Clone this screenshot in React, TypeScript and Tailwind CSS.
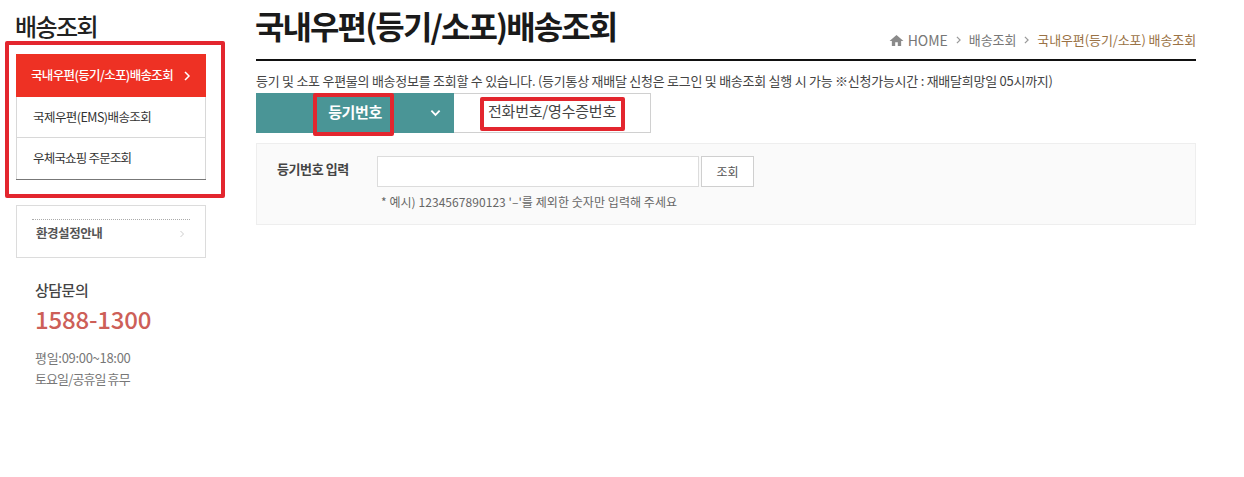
import React from "react";

function Chevron({ className, color, width = 1.5 }: { className: string; color: string; width?: number }) {
  return (
    <svg viewBox="0 0 8 10" className={className} fill="none" stroke={color} strokeWidth={width}>
      <path d="M2 1l4 4-4 4" />
    </svg>
  );
}

export default function App() {
  return (
    <div className="relative flex w-[1244px] h-[477px] bg-white pl-4 font-['Noto_Sans_CJK_KR','Noto_Sans',sans-serif] text-[#333] overflow-hidden">
      <aside className="w-[190px] shrink-0">
        <h2 className="mt-[9px] h-[36px] -ml-[1px] text-[24px] leading-[34px] font-medium tracking-[-1.6px] text-[#222]">배송조회</h2>
        <nav className="mt-[9px] border-b border-[#777]">
          <div className="flex items-center h-[43px] bg-[#ee3124] pl-[15px] text-[12.5px] font-medium tracking-[-0.65px] text-white">
            <span>국내우편(등기/소포)배송조회</span>
            <Chevron className="w-[8px] h-[10px] ml-[10px]" color="#fff" />
          </div>
          <div className="flex items-center h-[41px] pt-[1px] border-x border-b border-[#d8d8d8] pl-4 text-[12.5px] tracking-[-0.55px] text-[#333]">국제우편(EMS)배송조회</div>
          <div className="flex items-center h-[41px] border-x border-[#d8d8d8] pl-4 text-[12.5px] tracking-[-0.8px] text-[#333]">우체국쇼핑 주문조회</div>
        </nav>
        <div className="mt-[25px] h-[53px] border border-[#dcdcdc] px-[15px] pt-[13px]">
          <div className="flex items-center justify-between h-[28px] border-t border-dotted border-[#aaa] pl-[4px] pr-[5px]">
            <span className="text-[12.5px] font-bold tracking-[-0.45px] text-[#555]">환경설정안내</span>
            <Chevron className="w-[6px] h-[10px]" color="#bbb" width={1} />
          </div>
        </div>
        <div className="mt-[22px] pl-[19px]">
          <div className="text-[15px] leading-[20px] font-medium tracking-[-0.5px] text-[#444]">상담문의</div>
          <div className="mt-[3px] text-[24px] leading-[32px] font-medium tracking-[-0.2px] text-[#cd5f58]">1588-1300</div>
          <div className="mt-[12px] text-[13px] leading-[21px] text-[#777]">
            <div className="tracking-[-0.3px]">평일:09:00~18:00</div>
            <div className="tracking-[-0.9px]">토요일/공휴일 휴무</div>
          </div>
        </div>
      </aside>
      <main className="ml-[50px] w-[940px] shrink-0">
        <div className="flex items-end justify-between h-[61px] border-b-2 border-[#111]">
          <h1 className="self-start mt-[2px] -ml-[1px] text-[32px] leading-[46px] font-semibold tracking-[-1.9px] text-[#1a1a1a]">국내우편(등기/소포)배송조회</h1>
          <div className="flex items-center h-[40px] pt-[2px] text-[13px] text-[#777] tracking-[-0.1px]">
            <svg viewBox="0 0 16 14" className="w-[15px] h-[13px] mr-[4px]" fill="#8a8a8a"><path d="M8 1L0.5 7.5h2.5V13h3.6V9h2.8v4H13V7.5h2.5z" /></svg>
            <span className="text-[14px] tracking-[0]">HOME</span>
            <Chevron className="w-[7px] h-[8px] mx-[7px]" color="#999" />
            <span>배송조회</span>
            <Chevron className="w-[7px] h-[8px] mx-[7px]" color="#999" />
            <span className="text-[#9a7245]">국내우편(등기/소포) 배송조회</span>
          </div>
        </div>
        <p className="mt-[10px] h-[22px] text-[13px] leading-[20px] tracking-[-0.26px] text-[#444]">등기 및 소포 우편물의 배송정보를 조회할 수 있습니다. (등기통상 재배달 신청은 로그인 및 배송조회 실행 시 가능 ※신청가능시간 : 재배달희망일 05시까지)</p>
        <div className="flex w-[395px] h-[40px]">
          <div className="relative flex items-center justify-center w-[198px] pb-[1px] bg-[#4a9596] text-white text-[15px] font-bold tracking-[-0.4px]">
            등기번호
            <svg viewBox="0 0 12 8" className="absolute right-[13px] top-[16px] w-[11px] h-[8px]" fill="none" stroke="#fff" strokeWidth="2"><path d="M1.5 1.5L6 6l4.5-4.5" /></svg>
          </div>
          <div className="flex items-center justify-center flex-1 pb-[3px] border border-l-0 border-[#d0d0d0] text-[15px] tracking-[-0.2px] text-[#444]">전화번호/영수증번호</div>
        </div>
        <div className="mt-[10px] h-[82px] border border-[#eeeeee] bg-[#fafafa] flex">
          <div className="w-[120px] pl-[20px] pt-[15px] text-[13px] leading-[20px] font-bold tracking-[-0.4px] text-[#444]">등기번호 입력</div>
          <div className="pt-[12px]">
            <div className="flex gap-[2px] h-[31px]">
              <input aria-label="등기번호 입력" className="w-[322px] h-[31px] border border-[#dcdcdc] bg-white" />
              <button className="w-[53px] h-[31px] border border-[#cfcfcf] bg-white text-[12px] text-[#555]">조회</button>
            </div>
            <div className="mt-[5px] pl-[4px] text-[12px] leading-[20px] tracking-[0.06px] text-[#666]">* 예시) 1234567890123 '–'를 제외한 숫자만 입력해 주세요</div>
          </div>
        </div>
      </main>
      <div className="absolute left-[5px] top-[41px] w-[220px] h-[157px] border-4 border-[#e3262e] rounded-[2px]" />
      <div className="absolute left-[313px] top-[93px] w-[81px] h-[43px] border-4 border-[#e3262e] rounded-[2px]" />
      <div className="absolute left-[480px] top-[97px] w-[145px] h-[34px] border-4 border-[#e3262e] rounded-[2px]" />
    </div>
  );
}
